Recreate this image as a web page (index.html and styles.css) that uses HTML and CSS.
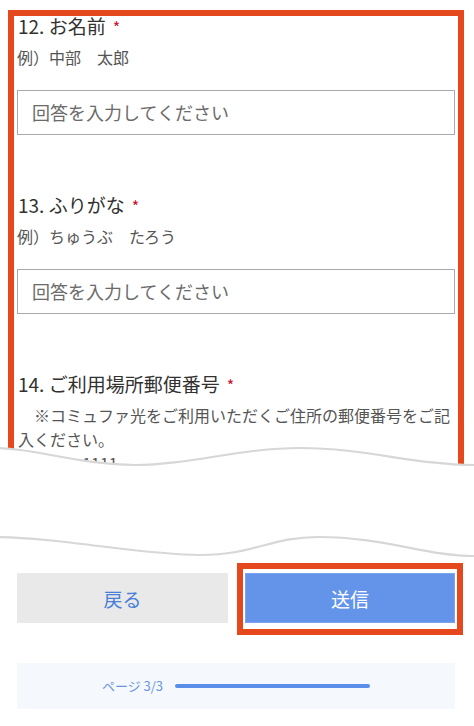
FILE: index.html
```html
<!DOCTYPE html>
<html lang="ja">
<head>
<meta charset="utf-8">
<title>フォーム</title>
<link rel="stylesheet" href="styles.css">
</head>
<body>
<div class="page">
  <div class="form-clip">
    <div class="frame">
      <section class="question">
        <div class="q-title">12. お名前<span class="req">*</span></div>
        <div class="q-sub">例）中部　太郎</div>
        <div class="q-input">回答を入力してください</div>
      </section>
      <section class="question">
        <div class="q-title">13. ふりがな<span class="req">*</span></div>
        <div class="q-sub">例）ちゅうぶ　たろう</div>
        <div class="q-input">回答を入力してください</div>
      </section>
      <section class="question">
        <div class="q-title">14. ご利用場所郵便番号<span class="req">*</span></div>
        <p class="q-desc">　※コミュファ光をご利用いただくご住所の郵便番号をご記入ください。</p>
        <p class="q-desc">例）111-1111</p>
      </section>
    </div>
  </div>

  <svg class="tear" width="474" height="130" viewBox="0 0 474 130" aria-hidden="true">
    <path d="M-10,12 C30,11 80,29 135,29 C190,29 240,12 300,12 C365,12 415,29 474,29 L490,29 L490,130 L-10,130 Z" fill="#ffffff"/>
    <path d="M-10,12 C30,11 80,29 135,29 C190,29 240,12 300,12 C365,12 415,29 474,29 L490,29" fill="none" stroke="#d7d7d7" stroke-width="2.2"/>
    <path d="M-10,101 C60,101 140,119 200,119 C255,119 270,101 318,101 C385,101 425,120 474,120 L490,120" fill="none" stroke="#d7d7d7" stroke-width="2.2"/>
  </svg>

  <div class="actions">
    <div class="btn btn-back">戻る</div>
    <div class="btn btn-submit">送信</div>
  </div>

  <div class="progress">
    <span class="progress-label">ページ 3/3</span>
    <span class="progress-bar"></span>
  </div>
</div>
</body>
</html>
```

FILE: styles.css
```css
html, body {
  margin: 0;
  padding: 0;
  background: #ffffff;
}

body {
  font-family: "Noto Sans CJK JP", "Noto Sans", sans-serif;
  color: #323130;
}

.page {
  position: relative;
  width: 474px;
  height: 726px;
  overflow: hidden;
}

.form-clip {
  height: 470px;
  overflow: hidden;
  padding-top: 10px;
  box-sizing: border-box;
}

.frame {
  margin-left: 8px;
  width: 456px;
  box-sizing: border-box;
  border: 6px solid #e5481c;
  padding: 0 3px 200px;
}

.question + .question {
  margin-top: 60px;
}

.q-title {
  font-size: 19px;
  line-height: 20px;
  color: #323130;
  padding-left: 1px;
}

.req {
  color: #c8102e;
  font-size: 16px;
  margin-left: 7px;
}

.q-sub {
  margin-top: 8px;
  font-size: 16px;
  line-height: 24px;
  color: #555555;
}

.q-input {
  margin-top: 21px;
  height: 45px;
  box-sizing: border-box;
  border: 1px solid #a9a9a9;
  padding-left: 14px;
  font-size: 18px;
  line-height: 43px;
  color: #6b6b6b;
}

.q-desc {
  margin: 0;
  font-size: 16px;
  line-height: 24px;
  color: #555555;
  padding-left: 1px;
}

.q-title + .q-desc {
  margin-top: 8px;
}

.tear {
  position: absolute;
  left: 0;
  top: 436px;
  display: block;
}

.actions {
  margin: 103px 0 0 17px;
  display: grid;
  grid-template-columns: 211px 210px;
  column-gap: 17px;
}

.btn {
  height: 50px;
  display: flex;
  align-items: center;
  justify-content: center;
  font-size: 19px;
}

.btn-back {
  background: #e9e9e9;
  color: #4a7fd8;
}

.btn-submit {
  position: relative;
  background: #6394ea;
  color: #ffffff;
  box-shadow: inset 0 0 0 1px #79a4ef;
}

.btn-submit::after {
  content: "";
  position: absolute;
  left: -8px;
  right: -8px;
  top: -10px;
  bottom: -12px;
  border: 6px solid #e5481c;
}

.progress {
  margin: 40px 0 0 17px;
  width: 438px;
  height: 46px;
  background: #f5f9fe;
  display: flex;
  align-items: center;
  justify-content: center;
  gap: 12px;
}

.progress-label {
  font-size: 13px;
  color: #6a95de;
  line-height: 16px;
}

.progress-bar {
  width: 195px;
  height: 4px;
  border-radius: 2px;
  background: #5b8ee8;
}
```
